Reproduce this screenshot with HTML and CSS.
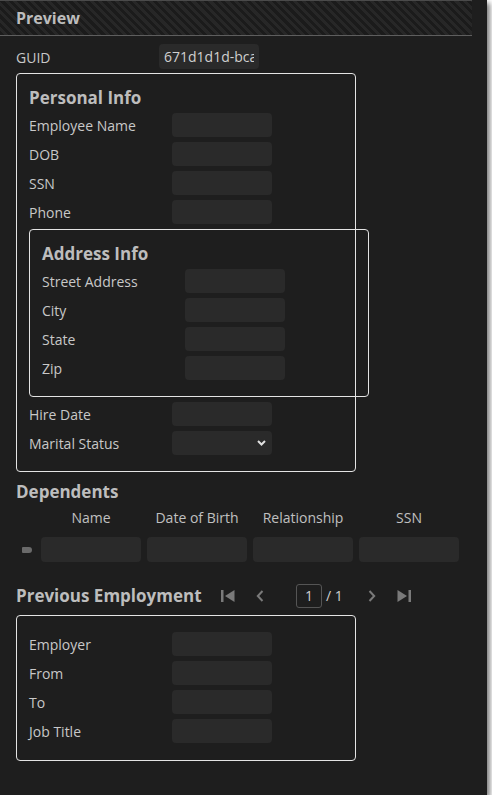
FILE: index.html
```html
<!DOCTYPE html>
<html>
<head>
<meta charset="utf-8">
<link rel="stylesheet" href="styles.css">
</head>
<body>
<div class="panel">
  <div class="header"><span class="header-title">Preview</span></div>
  <div class="content">
    <div class="row guid-row">
      <span class="label">GUID</span>
      <div class="input guid"><span class="guid-text">671d1d1d-bca</span></div>
    </div>

    <div class="group personal">
      <div class="group-title">Personal Info</div>
      <div class="rows">
        <div class="row"><span class="label">Employee Name</span><div class="input"></div></div>
        <div class="row"><span class="label">DOB</span><div class="input"></div></div>
        <div class="row"><span class="label">SSN</span><div class="input"></div></div>
        <div class="row"><span class="label">Phone</span><div class="input"></div></div>
        <div class="group address">
          <div class="group-title">Address Info</div>
          <div class="rows">
            <div class="row"><span class="label">Street Address</span><div class="input"></div></div>
            <div class="row"><span class="label">City</span><div class="input"></div></div>
            <div class="row"><span class="label">State</span><div class="input"></div></div>
            <div class="row"><span class="label">Zip</span><div class="input"></div></div>
          </div>
        </div>
        <div class="row"><span class="label">Hire Date</span><div class="input"></div></div>
        <div class="row"><span class="label">Marital Status</span>
          <div class="input select">
            <svg class="chev" width="9" height="6" viewBox="0 0 9 6"><path d="M1 1 L4.5 4.5 L8 1" fill="none" stroke="#e0e0e0" stroke-width="2"/></svg>
          </div>
        </div>
      </div>
    </div>

    <div class="section-title dependents-title">Dependents</div>
    <div class="table-head">
      <span class="th">Name</span>
      <span class="th">Date of Birth</span>
      <span class="th">Relationship</span>
      <span class="th">SSN</span>
    </div>
    <div class="table-row">
      <div class="indicator-cell"><span class="indicator"></span></div>
      <div class="input cell"></div>
      <div class="input cell"></div>
      <div class="input cell"></div>
      <div class="input cell"></div>
    </div>

    <div class="pager-row">
      <span class="section-title prev-title">Previous Employment</span>
      <svg class="pg first" width="14" height="12" viewBox="0 0 14 12"><rect x="0" y="0" width="2.5" height="12" fill="#7a7a7a"/><path d="M4 6 L13.5 0 V12 Z" fill="#7a7a7a"/></svg>
      <svg class="pg prev" width="8" height="12" viewBox="0 0 8 12"><path d="M6.5 1 L1.8 6 L6.5 11" fill="none" stroke="#7a7a7a" stroke-width="2"/></svg>
      <div class="page-box">1</div>
      <span class="page-total">/ 1</span>
      <svg class="pg next" width="8" height="12" viewBox="0 0 8 12"><path d="M1.5 1 L6.2 6 L1.5 11" fill="none" stroke="#7a7a7a" stroke-width="2"/></svg>
      <svg class="pg last" width="14" height="12" viewBox="0 0 14 12"><path d="M0.5 0 L10 6 L0.5 12 Z" fill="#7a7a7a"/><rect x="11.5" y="0" width="2.5" height="12" fill="#7a7a7a"/></svg>
    </div>

    <div class="group employment">
      <div class="rows">
        <div class="row"><span class="label">Employer</span><div class="input"></div></div>
        <div class="row"><span class="label">From</span><div class="input"></div></div>
        <div class="row"><span class="label">To</span><div class="input"></div></div>
        <div class="row"><span class="label">Job Title</span><div class="input"></div></div>
      </div>
    </div>
  </div>
</div>
</body>
</html>
```
FILE: styles.css
```css
html, body {
  margin: 0;
  padding: 0;
  background: #ffffff;
}

body {
  font-family: "Open Sans", "Liberation Sans", sans-serif;
  color: #c8c8c8;
}

.panel {
  width: 487px;
  height: 795px;
  background: #1e1e1e;
  box-shadow: 3px 3px 5px rgba(0, 0, 0, 0.5);
  overflow: hidden;
}

.header {
  box-sizing: border-box;
  width: 472px;
  height: 36px;
  border-top: 1px solid #4a4a4a;
  border-bottom: 1px solid #5e5e5e;
  background: repeating-linear-gradient(45deg, #1b1b1b 0 3px, #272727 3px 6px);
  display: flex;
  align-items: center;
  padding-left: 16px;
}

.header-title {
  font-size: 16px;
  font-weight: 700;
  color: #bdbdbd;
  line-height: 20px;
}

.content {
  display: flex;
  flex-direction: column;
  align-items: flex-start;
  padding: 8px 0 0 16px;
}

.row {
  display: flex;
  align-items: center;
  height: 24px;
}

.guid-row {
  height: 25px;
  margin-bottom: 4px;
}

.label {
  width: 143px;
  flex: none;
  font-size: 14px;
  line-height: 20px;
  padding-top: 2px;
  color: #c8c8c8;
  white-space: nowrap;
}

.input {
  box-sizing: border-box;
  width: 100px;
  height: 24px;
  background: #2a2a2a;
  border-radius: 4px;
  flex: none;
}

.guid {
  height: 25px;
  padding: 0 5px;
  display: flex;
  align-items: center;
}

.guid-text {
  display: block;
  width: 90px;
  overflow: hidden;
  white-space: nowrap;
  font-size: 14px;
  line-height: 20px;
  color: #d0d0d0;
}

.group {
  box-sizing: border-box;
  width: 340px;
  border: 1px solid #e4e4e4;
  border-radius: 4px;
  padding: 13px 12px 16px;
  flex: none;
}

.group-title {
  font-size: 17px;
  font-weight: 700;
  line-height: 22px;
  color: #bdbdbd;
  margin-bottom: 4px;
}

.rows {
  display: flex;
  flex-direction: column;
  align-items: flex-start;
  gap: 5px;
}

.address {
  padding-bottom: 16px;
}

.select {
  display: flex;
  align-items: center;
  justify-content: flex-end;
  padding-right: 6px;
}

.section-title {
  font-size: 17px;
  font-weight: 700;
  line-height: 22px;
  color: #bdbdbd;
  white-space: nowrap;
}

.dependents-title {
  margin-top: 9px;
}

.table-head {
  display: flex;
  gap: 6px;
  padding-left: 25px;
  margin-top: 5px;
  height: 20px;
}

.th {
  width: 100px;
  text-align: center;
  font-size: 14px;
  line-height: 20px;
  color: #c0c0c0;
  white-space: nowrap;
}

.table-row {
  display: flex;
  gap: 6px;
  margin-top: 9px;
  height: 25px;
  align-items: center;
}

.indicator-cell {
  box-sizing: border-box;
  width: 19px;
  display: flex;
  align-items: center;
  padding-left: 6px;
}

.indicator {
  display: block;
  width: 10px;
  height: 6px;
  background: #6a6a6a;
  border-radius: 1px 3px 3px 1px;
}

.cell {
  height: 25px;
}

.pager-row {
  display: flex;
  align-items: center;
  height: 24px;
  margin-top: 22px;
}

.prev-title {
  width: 205px;
}

.pg {
  display: block;
  flex: none;
}

.prev {
  margin-left: 21px;
}

.page-box {
  box-sizing: border-box;
  margin-left: 32px;
  width: 26px;
  height: 24px;
  border: 1px solid #555555;
  border-radius: 3px;
  font-size: 14px;
  line-height: 22px;
  text-align: center;
  color: #cfcfcf;
}

.page-total {
  width: 21px;
  margin-left: 4px;
  font-size: 14px;
  line-height: 20px;
  color: #cfcfcf;
  white-space: nowrap;
}

.next {
  margin-left: 21px;
}

.last {
  margin-left: 21px;
}

.employment {
  margin-top: 7px;
  padding: 16px 12px 17px;
}
```
